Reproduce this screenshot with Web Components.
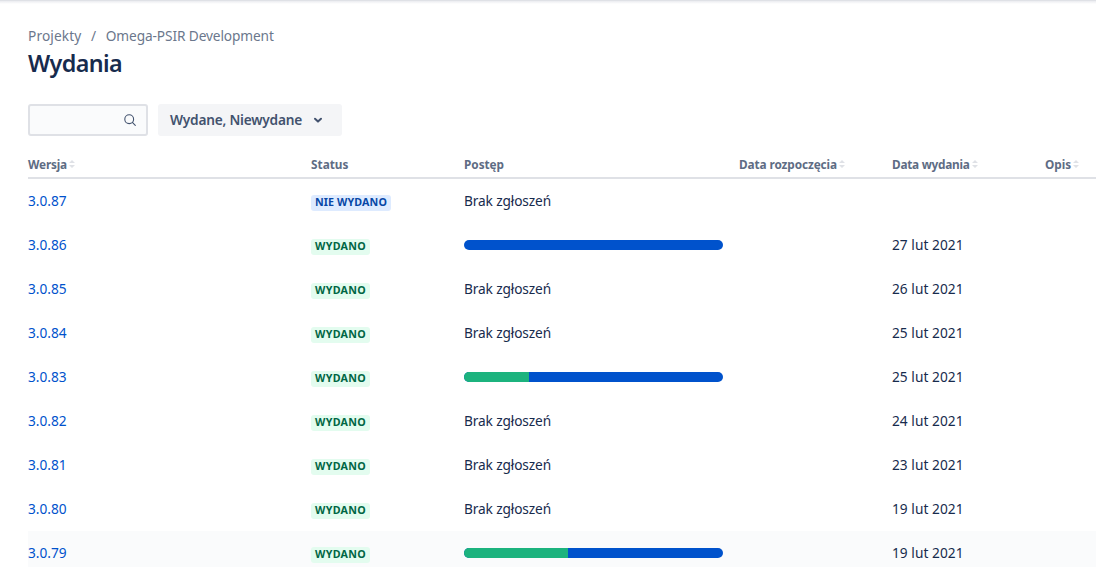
<!DOCTYPE html>
<html lang="pl">
<head>
<meta charset="utf-8">
<title>Wydania</title>
<style>
html,body{margin:0;height:100%;overflow:hidden;background:#fff}
body{font:13.7px/20px "Noto Sans","Open Sans",sans-serif;color:#172b4d}
</style>
</head>
<body>
<releases-page></releases-page>
<script>
const define=(name,html,ready)=>{
  const t=document.createElement('template');t.innerHTML=html;
  customElements.define(name,class extends HTMLElement{
    connectedCallback(){
      if(this.shadowRoot)return;
      this.attachShadow({mode:'open'}).append(t.content.cloneNode(true));
      if(ready)ready.call(this,this.shadowRoot);
    }
  });
};

/* Text whose tracking is adjusted so that it fills a given width */
define('fit-text','<style>:host{display:inline-block;white-space:nowrap}</style><span><slot></slot></span>',function(root){
  const s=root.querySelector('span'),w=+this.getAttribute('w'),n=this.textContent.length;
  s.style.letterSpacing=((w-s.getBoundingClientRect().width)/n).toFixed(3)+'px';
  this.style.width=w+'px';
});

define('search-field',`<style>
:host{display:flex;box-sizing:border-box;width:120px;height:32px;border:2px solid #dfe1e6;border-radius:3px;background:#fafbfc;align-items:center;justify-content:flex-end;padding-right:8px}
svg{display:block}</style>
<svg width="16" height="16" viewBox="0 0 16 16" fill="none" stroke="#42526e" stroke-width="1.1"><circle cx="7.2" cy="7.2" r="4.4"/><path d="M10.4 10.4 13.3 13.3" stroke-linecap="round"/></svg>`);

define('filter-button',`<style>
:host{display:flex;box-sizing:border-box;width:184px;height:32px;border-radius:3px;background:#f4f5f7;color:#42526e;font-weight:600;align-items:center;padding-left:12px;gap:11px}
svg{display:block}</style>
<slot></slot><svg width="10" height="8" viewBox="0 0 10 8" fill="none" stroke="#42526e" stroke-width="2" stroke-linecap="round" stroke-linejoin="round"><path d="M2 2.8 5 5.6 8 2.8"/></svg>`);

define('column-head',`<style>
:host{display:flex;align-items:center;color:#5e6c84;font-size:11.8px;font-weight:700;line-height:16px;gap:2px}
svg{display:none}:host([sortable]) svg{display:block}</style>
<slot></slot><svg width="6" height="8" viewBox="0 0 6 8" fill="#dfe1e6"><path d="M0 3 3 0 6 3ZM0 5 3 8 6 5Z"/></svg>`);

define('status-badge',`<style>
:host{display:inline-flex;box-sizing:border-box;height:16px;padding:0 4px;border-radius:3px;margin-top:4px;background:#e3fcef;color:#006644;font-size:10.7px;font-weight:700;line-height:15px}
:host([pending]){background:#deebff;color:#0747a6}</style><slot></slot>`);

define('progress-bar',`<style>
:host{display:flex;width:259px;height:10px;border-radius:5px;overflow:hidden;background:#0052cc}
i{background:#1cb37e}</style><i></i>`,function(root){
  root.querySelector('i').style.width=this.getAttribute('done')+'px';
});

define('release-row',`<style>
:host{display:grid;grid-template-columns:283px 153px 275px 153px 153px 1fr;height:44px;align-items:center}
:host([active]){background:#fafbfc}
a{color:#0052cc;text-decoration:none}</style>
<a><slot name="version"></slot></a><div><slot name="status"></slot></div><div><slot name="progress"></slot></div><div></div><div><slot name="date"></slot></div><div></div>`);

define('release-table',`<style>
:host{display:block;margin-left:28px}
header{display:grid;grid-template-columns:283px 153px 275px 153px 153px 1fr;height:23px;padding-bottom:2px;align-items:center;border-bottom:2px solid #dfe1e6}
</style>
<header>
<column-head sortable><fit-text w="39">Wersja</fit-text></column-head>
<column-head><fit-text w="37.5">Status</fit-text></column-head>
<column-head><fit-text w="40">Postęp</fit-text></column-head>
<column-head sortable><fit-text w="98">Data rozpoczęcia</fit-text></column-head>
<column-head sortable><fit-text w="77.5">Data wydania</fit-text></column-head>
<column-head sortable><fit-text w="26">Opis</fit-text></column-head>
</header><main></main>`,function(root){
  const data=[['3.0.87',null,''],['3.0.86',0,'27'],['3.0.85',null,'26'],['3.0.84',null,'25'],['3.0.83',65,'25'],['3.0.82',null,'24'],['3.0.81',null,'23'],['3.0.80',null,'19'],['3.0.79',104,'19']];
  root.querySelector('main').innerHTML=data.map(([v,p,d],i)=>`<release-row${i===8?' active':''}><fit-text slot="version" w="38.5">${v}</fit-text>${
    i?'<status-badge slot="status"><fit-text w="51">WYDANO</fit-text></status-badge>':'<status-badge slot="status" pending><fit-text w="72">NIE WYDANO</fit-text></status-badge>'}${
    p===null?'<fit-text slot="progress" w="87">Brak zgłoszeń</fit-text>':`<progress-bar slot="progress" done="${p}"></progress-bar>`}${
    d?`<fit-text slot="date" w="71.5">${d} lut 2021</fit-text>`:''}</release-row>`).join('');
});

define('releases-page',`<style>
:host{display:flex;flex-direction:column;height:567px;overflow:hidden}
.top{height:4px;flex:none;background:linear-gradient(#dfe1e6 1px,#ebecf0 1px,#fff)}
nav{display:flex;color:#6b778c;margin:22px 0 0 28px;height:20px}
nav span{width:24.3px;text-align:center}
h1{margin:3px 0 0 28px;font-size:23.3px;line-height:28px;font-weight:600;height:28px}
.tools{display:flex;gap:10px;margin:27px 0 16px 28px}
release-table{flex:none}</style>
<div class="top"></div>
<nav><fit-text w="53.5">Projekty</fit-text><span>/</span><fit-text w="168">Omega-PSIR Development</fit-text></nav>
<h1><fit-text w="94">Wydania</fit-text></h1>
<div class="tools"><search-field></search-field><filter-button><fit-text w="132">Wydane, Niewydane</fit-text></filter-button></div>
<release-table></release-table>`);
</script>
</body>
</html>
